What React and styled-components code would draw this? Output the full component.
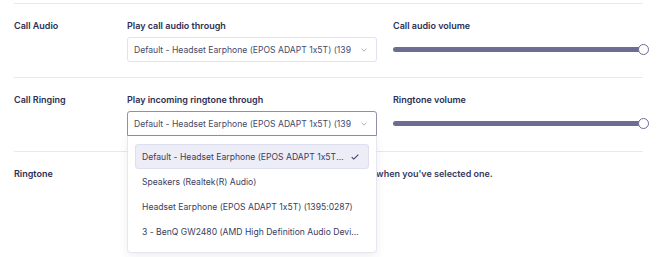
import React from "react";
import styled, { createGlobalStyle } from "styled-components";

const GlobalStyle = createGlobalStyle`
  body {
    margin: 0;
    background: #ffffff;
    font-family: Inter, "Noto Sans", sans-serif;
    font-feature-settings: "calt" 0;
    color: #2c2f55;
  }
`;

const Page = styled.div`
  width: 670px;
  min-height: 257px;
  box-sizing: border-box;
  padding: 3px 27px 0 14px;
`;

const Section = styled.section`
  display: grid;
  grid-template-columns: 113px 266px 250px;
  border-top: 1px solid #e8e8f2;
  padding: 15px 0 15px;
`;

const Heading = styled.div`
  font-size: 9px;
  font-weight: 600;
  line-height: 13px;
  color: #2c2f55;
`;

const Field = styled.div`
  display: flex;
  flex-direction: column;
  gap: 5px;
  grid-column: ${(props) => props.span || "auto"};
`;

const SelectWrap = styled.div`
  position: relative;
  width: 250px;
`;

const SelectBox = styled.div`
  box-sizing: border-box;
  height: 25px;
  display: flex;
  align-items: center;
  gap: 10px;
  padding: 0 9px 0 6px;
  border: 1px solid ${(props) => (props.open ? "#8d8fab" : "#e1e2ee")};
  border-radius: ${(props) => (props.open ? "3px 3px 0 0" : "3px")};
  font-size: 8.6px;
  color: #46496c;
`;

const SelectValue = styled.span`
  flex: 1;
  min-width: 0;
  white-space: nowrap;
  overflow: hidden;
`;

const Menu = styled.div`
  position: absolute;
  top: 100%;
  left: 0;
  width: 250px;
  box-sizing: border-box;
  padding: 8px 7px;
  background: #ffffff;
  border: 1px solid #e6e6f0;
  border-top: none;
  border-radius: 0 0 4px 4px;
  box-shadow: 0 3px 10px rgba(44, 47, 85, 0.08);
  z-index: 10;
`;

const Option = styled.div`
  box-sizing: border-box;
  height: 25px;
  display: flex;
  align-items: center;
  gap: 6px;
  padding: 0 9px 0 6px;
  border: 1px solid ${(props) => (props.selected ? "#dedfee" : "transparent")};
  border-radius: 3px;
  background: ${(props) => (props.selected ? "#ededf7" : "transparent")};
  font-size: 8.6px;
  color: #3a3d5e;
`;

const OptionText = styled.span`
  flex: 1;
  min-width: 0;
  white-space: nowrap;
  overflow: hidden;
  text-overflow: ellipsis;
`;

const Slider = styled.div`
  position: relative;
  height: 25px;
  display: flex;
  align-items: center;
`;

const Track = styled.div`
  width: 100%;
  height: 5px;
  border-radius: 3px;
  background: #6b6e91;
`;

const Thumb = styled.div`
  position: absolute;
  right: -5.5px;
  top: 7px;
  width: 11px;
  height: 11px;
  box-sizing: border-box;
  border-radius: 50%;
  background: #ffffff;
  border: 1.5px solid #6b6e91;
`;

const Note = styled.div`
  font-size: 9px;
  font-weight: 600;
  line-height: 13px;
  color: #363a5e;
  white-space: nowrap;
`;

const devices = [
  "Default - Headset Earphone (EPOS ADAPT 1x5T) (1395:0287)",
  "Speakers (Realtek(R) Audio)",
  "Headset Earphone (EPOS ADAPT 1x5T) (1395:0287)",
  "3 - BenQ GW2480 (AMD High Definition Audio Device)",
];

function Select({ value, open }) {
  return (
    <SelectWrap>
      <SelectBox open={open}>
        <SelectValue>{value}</SelectValue>
        <svg width="6" height="4" viewBox="0 0 6 4">
          <path d="M0.6 0.8 L3 3.1 L5.4 0.8" fill="none" stroke="#a3a5bb" strokeWidth="0.9" />
        </svg>
      </SelectBox>
      {open && (
        <Menu>
          {devices.map((d, i) => (
            <Option key={d} selected={i === 0}>
              <OptionText>{d}</OptionText>
              {i === 0 && (
                <svg width="8" height="6" viewBox="0 0 8 6">
                  <path d="M0.7 3.1 L2.8 5.1 L7.3 0.7" fill="none" stroke="#3a3d5e" strokeWidth="1.1" />
                </svg>
              )}
            </Option>
          ))}
        </Menu>
      )}
    </SelectWrap>
  );
}

function Volume() {
  return (
    <Slider>
      <Track />
      <Thumb />
    </Slider>
  );
}

export default function App() {
  return (
    <>
      <GlobalStyle />
      <Page>
        <Section>
          <Heading>Call Audio</Heading>
          <Field>
            <Heading>Play call audio through</Heading>
            <Select value={devices[0]} />
          </Field>
          <Field>
            <Heading>Call audio volume</Heading>
            <Volume />
          </Field>
        </Section>
        <Section>
          <Heading>Call Ringing</Heading>
          <Field>
            <Heading>Play incoming ringtone through</Heading>
            <Select value={devices[0]} open />
          </Field>
          <Field>
            <Heading>Ringtone volume</Heading>
            <Volume />
          </Field>
        </Section>
        <Section>
          <Heading>Ringtone</Heading>
          <Field span="2 / 4">
            <Note>Choose a ringtone below. You'll hear a short preview of it when you've selected one.</Note>
          </Field>
        </Section>
      </Page>
    </>
  );
}
